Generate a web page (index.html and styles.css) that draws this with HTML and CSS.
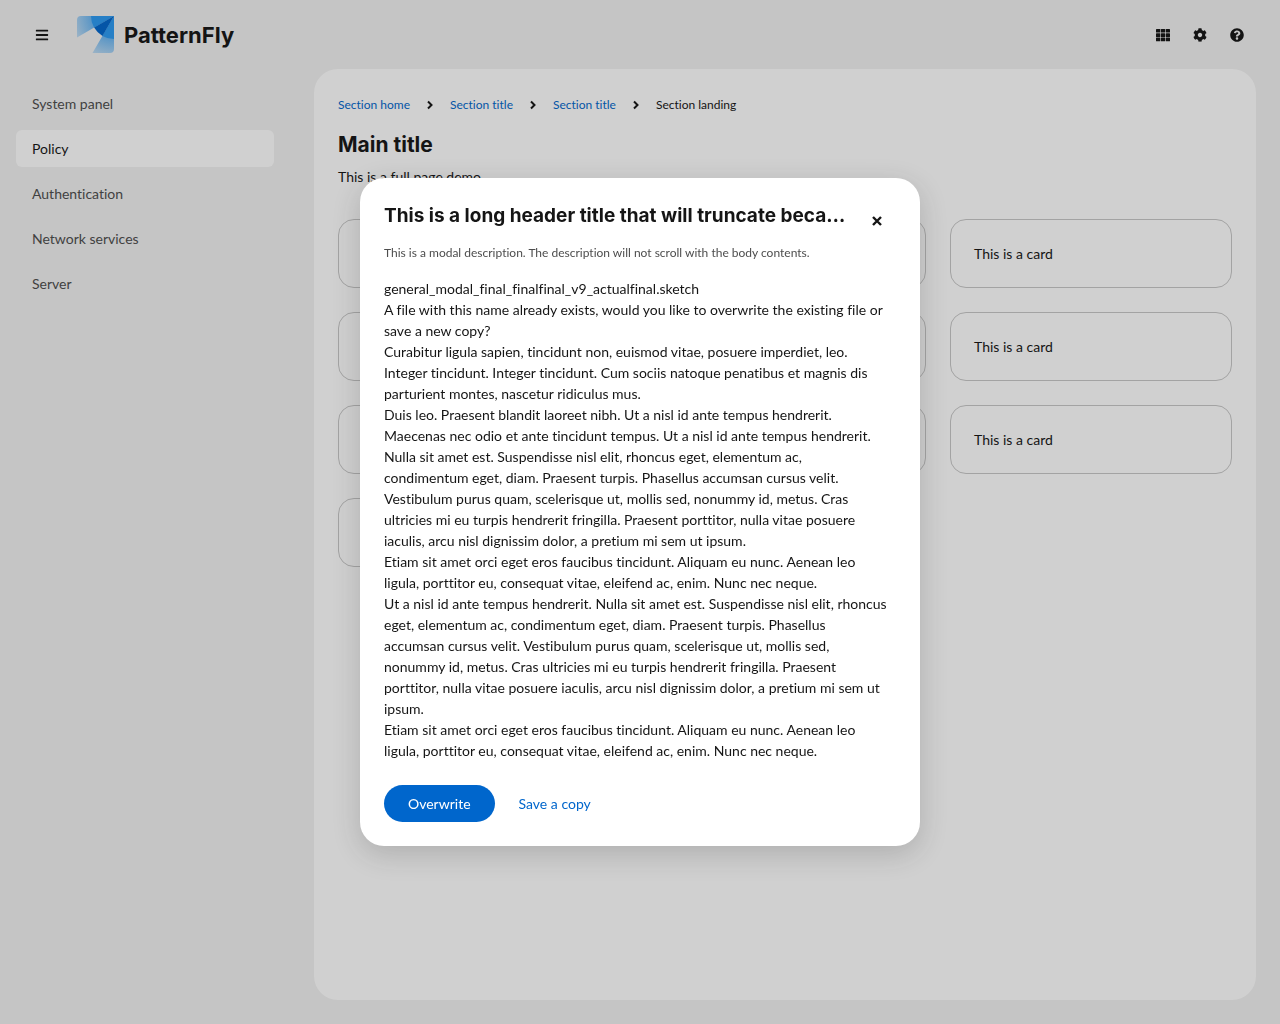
FILE: index.html
```html
<!DOCTYPE html>
<html lang="en">
<head>
<meta charset="utf-8">
<meta name="viewport" content="width=device-width, initial-scale=1">
<title>PatternFly</title>
<link rel="stylesheet" href="styles.css">
</head>
<body>
<div class="page">
  <header class="masthead">
    <button class="icon-button" type="button" aria-label="Global navigation">
      <svg class="icon" viewBox="0 0 448 512" aria-hidden="true"><path d="M16 132h416c8.800 0 16-7.200 16-16V76c0-8.800-7.200-16-16-16H16C7.200 60 0 67.200 0 76v40c0 8.800 7.200 16 16 16zm0 160h416c8.800 0 16-7.200 16-16v-40c0-8.800-7.200-16-16-16H16c-8.800 0-16 7.200-16 16v40c0 8.800 7.200 16 16 16zm0 160h416c8.800 0 16-7.200 16-16v-40c0-8.800-7.200-16-16-16H16c-8.800 0-16 7.200-16 16v40c0 8.800 7.200 16 16 16z"/></svg>
    </button>
    <a class="brand" href="#">
      <svg class="brand-mark" viewBox="0 0 37 37" aria-hidden="true">
        <defs>
          <radialGradient id="fade" gradientUnits="userSpaceOnUse" cx="37" cy="0" r="43">
            <stop offset="0.500" stop-color="#2b9af3" stop-opacity="0.700"/>
            <stop offset="1" stop-color="#2b9af3" stop-opacity="0.250"/>
          </radialGradient>
        </defs>
        <path fill="url(#fade)" d="M37 0H4a4 4 0 0 0-4 4v17.500zM37 0v33a4 4 0 0 1-4 4H15.500z"/>
        <path fill="#2b9af3" d="M37 0H14a23 23 0 0 0 3.100 11.500zM37 0v23a23 23 0 0 1-11.500-3.100z"/>
        <path fill="#06c" d="M37 0L17.100 11.500a23 23 0 0 0 8.400 8.400z"/>
      </svg>
      <span class="brand-name">PatternFly</span>
    </a>
    <div class="tools">
      <button class="icon-button" type="button" aria-label="Applications">
        <svg class="icon" viewBox="0 0 14 14" aria-hidden="true">
          <rect x="0" y="1" width="4.300" height="3.600" rx=".5"/><rect x="4.900" y="1" width="4.300" height="3.600" rx=".5"/><rect x="9.800" y="1" width="4.200" height="3.600" rx=".5"/>
          <rect x="0" y="5.300" width="4.300" height="3.600" rx=".5"/><rect x="4.900" y="5.300" width="4.300" height="3.600" rx=".5"/><rect x="9.800" y="5.300" width="4.200" height="3.600" rx=".5"/>
          <rect x="0" y="9.600" width="4.300" height="3.600" rx=".5"/><rect x="4.900" y="9.600" width="4.300" height="3.600" rx=".5"/><rect x="9.800" y="9.600" width="4.200" height="3.600" rx=".5"/>
        </svg>
      </button>
      <button class="icon-button" type="button" aria-label="Settings">
        <svg class="icon" viewBox="0 0 512 512" aria-hidden="true"><path d="M487.400 315.700l-42.600-24.600c4.300-23.200 4.300-47 0-70.200l42.600-24.600c4.900-2.800 7.100-8.600 5.500-14-11.100-35.600-30-67.800-54.700-94.600-3.800-4.100-10-5.100-14.800-2.300L380.800 110c-17.900-15.400-38.500-27.300-60.800-35.100V25.800c0-5.600-3.900-10.500-9.400-11.700-36.700-8.200-74.300-7.800-109.200 0-5.500 1.200-9.400 6.100-9.400 11.700V75c-22.200 7.900-42.800 19.800-60.800 35.100L88.700 85.500c-4.900-2.800-11-1.900-14.800 2.300-24.700 26.700-43.600 58.900-54.700 94.600-1.700 5.400.6 11.200 5.500 14L67.300 221c-4.300 23.200-4.300 47 0 70.200l-42.600 24.600c-4.900 2.800-7.100 8.600-5.500 14 11.100 35.600 30 67.800 54.700 94.600 3.800 4.100 10 5.100 14.800 2.300l42.600-24.600c17.900 15.400 38.500 27.300 60.800 35.100v49.200c0 5.600 3.900 10.500 9.400 11.700 36.700 8.200 74.300 7.800 109.200 0 5.500-1.200 9.400-6.100 9.400-11.700v-49.200c22.200-7.900 42.800-19.800 60.800-35.100l42.600 24.600c4.900 2.800 11 1.900 14.800-2.300 24.700-26.700 43.600-58.900 54.700-94.600 1.500-5.500-.7-11.300-5.600-14.100zM256 336c-44.100 0-80-35.900-80-80s35.900-80 80-80 80 35.900 80 80-35.900 80-80 80z"/></svg>
      </button>
      <button class="icon-button" type="button" aria-label="Help">
        <svg class="icon" viewBox="0 0 512 512" aria-hidden="true"><path d="M504 256c0 137-111 248-248 248S8 393 8 256C8 119.100 119 8 256 8s248 111.100 248 248zM262.700 90c-54.500 0-89.300 23-116.500 63.800-3.500 5.300-2.400 12.400 2.700 16.300l34.700 26.300c5.200 3.900 12.600 3 16.700-2.100 17.900-22.700 30.100-35.800 57.300-35.800 20.400 0 45.700 13.100 45.700 33 0 15-12.400 22.700-32.500 34C247.100 238.500 216 254.900 216 296v4c0 6.600 5.400 12 12 12h56c6.600 0 12-5.400 12-12v-1.300c0-28.500 83.200-29.600 83.200-106.700 0-58-60.200-102-116.500-102zM256 338c-25.400 0-46 20.600-46 46s20.600 46 46 46 46-20.600 46-46-20.600-46-46-46z"/></svg>
      </button>
    </div>
  </header>

  <nav class="sidebar" aria-label="Global">
    <a class="nav-link" href="#">System panel</a>
    <a class="nav-link nav-link-current" href="#" aria-current="page">Policy</a>
    <a class="nav-link" href="#">Authentication</a>
    <a class="nav-link" href="#">Network services</a>
    <a class="nav-link" href="#">Server</a>
  </nav>

  <main class="main">
    <nav class="breadcrumb" aria-label="Breadcrumb">
      <a class="link" href="#">Section home</a>
      <svg class="chevron" viewBox="0 0 6 10" aria-hidden="true"><path d="M1 1.500L4.500 5 1 8.500"/></svg>
      <a class="link" href="#">Section title</a>
      <svg class="chevron" viewBox="0 0 6 10" aria-hidden="true"><path d="M1 1.500L4.500 5 1 8.500"/></svg>
      <a class="link" href="#">Section title</a>
      <svg class="chevron" viewBox="0 0 6 10" aria-hidden="true"><path d="M1 1.500L4.500 5 1 8.500"/></svg>
      <span aria-current="page">Section landing</span>
    </nav>
    <h1 class="title">Main title</h1>
    <p class="subtitle">This is a full page demo.</p>
    <div class="gallery">
      <article class="card">This is a card</article>
      <article class="card">This is a card</article>
      <article class="card">This is a card</article>
      <article class="card">This is a card</article>
      <article class="card">This is a card</article>
      <article class="card">This is a card</article>
      <article class="card">This is a card</article>
      <article class="card">This is a card</article>
      <article class="card">This is a card</article>
      <article class="card">This is a card</article>
    </div>
  </main>
</div>

<div class="backdrop">
  <section class="modal" role="dialog" aria-modal="true" aria-labelledby="modal-title" aria-describedby="modal-description">
    <header class="modal-header">
      <h2 class="modal-title" id="modal-title">This is a long header title that will truncate because modal titles should be very short</h2>
      <button class="icon-button" type="button" aria-label="Close">
        <svg class="icon" viewBox="0 0 14 14" aria-hidden="true"><path class="cross" d="M3 3l8 8M11 3l-8 8"/></svg>
      </button>
    </header>
    <p class="modal-description" id="modal-description">This is a modal description. The description will not scroll with the body contents.</p>
    <div class="modal-body">
      <p>general_modal_final_finalfinal_v9_actualfinal.sketch</p>
      <p>A file with this name already exists, would you like to overwrite the existing file or<br>
        save a new copy?</p>
      <p>Curabitur ligula sapien, tincidunt non, euismod vitae, posuere imperdiet, leo.<br>
        Integer tincidunt. Integer tincidunt. Cum sociis natoque penatibus et magnis dis<br>
        parturient montes, nascetur ridiculus mus.</p>
      <p>Duis leo. Praesent blandit laoreet nibh. Ut a nisl id ante tempus hendrerit.<br>
        Maecenas nec odio et ante tincidunt tempus. Ut a nisl id ante tempus hendrerit.<br>
        Nulla sit amet est. Suspendisse nisl elit, rhoncus eget, elementum ac,<br>
        condimentum eget, diam. Praesent turpis. Phasellus accumsan cursus velit.<br>
        Vestibulum purus quam, scelerisque ut, mollis sed, nonummy id, metus. Cras<br>
        ultricies mi eu turpis hendrerit fringilla. Praesent porttitor, nulla vitae posuere<br>
        iaculis, arcu nisl dignissim dolor, a pretium mi sem ut ipsum.</p>
      <p>Etiam sit amet orci eget eros faucibus tincidunt. Aliquam eu nunc. Aenean leo<br>
        ligula, porttitor eu, consequat vitae, eleifend ac, enim. Nunc nec neque.</p>
      <p>Ut a nisl id ante tempus hendrerit. Nulla sit amet est. Suspendisse nisl elit, rhoncus<br>
        eget, elementum ac, condimentum eget, diam. Praesent turpis. Phasellus<br>
        accumsan cursus velit. Vestibulum purus quam, scelerisque ut, mollis sed,<br>
        nonummy id, metus. Cras ultricies mi eu turpis hendrerit fringilla. Praesent<br>
        porttitor, nulla vitae posuere iaculis, arcu nisl dignissim dolor, a pretium mi sem ut<br>
        ipsum.</p>
      <p>Etiam sit amet orci eget eros faucibus tincidunt. Aliquam eu nunc. Aenean leo<br>
        ligula, porttitor eu, consequat vitae, eleifend ac, enim. Nunc nec neque.</p>
    </div>
    <footer class="modal-footer">
      <button class="button button-primary" type="button">Overwrite</button>
      <button class="button button-link" type="button">Save a copy</button>
    </footer>
  </section>
</div>
</body>
</html>
```
FILE: styles.css
```css
*,
*::before,
*::after {
  box-sizing: border-box;
}

body {
  margin: 0;
  background: #f2f2f2;
  color: #151515;
  font-family: Lato, "Open Sans", sans-serif;
  font-size: 14px;
  font-variant-ligatures: none;
  line-height: 21px;
}

h1,
h2,
p {
  margin: 0;
}

a {
  color: inherit;
  text-decoration: none;
}

button {
  font: inherit;
  border: 0;
  cursor: pointer;
}

/* Page shell */
.page {
  display: grid;
  grid-template-columns: 290px minmax(0, 1fr);
  grid-template-rows: auto 1fr;
  min-height: 100vh;
}

.masthead {
  grid-column: 1 / -1;
  display: flex;
  align-items: center;
  gap: 16px;
  padding: 16px 24px;
}

.icon-button {
  display: flex;
  flex: none;
  align-items: center;
  width: 37px;
  height: 37px;
  padding: 0 12px 0 11px;
  border-radius: 6px;
  background: transparent;
  color: #151515;
}

.icon {
  width: 14px;
  height: 14px;
  fill: currentColor;
}

.cross {
  stroke: currentColor;
  stroke-width: 2.4;
}

.brand {
  display: flex;
  align-items: center;
  gap: 10px;
}

.brand-mark {
  width: 37px;
  height: 37px;
}

.brand-name,
.title,
.modal-title {
  font-family: Inter, "Open Sans", sans-serif;
  font-weight: 700;
}

.brand-name {
  font-size: 22px;
  line-height: 36px;
}

.tools {
  display: flex;
  margin-left: auto;
}

/* Sidebar */
.sidebar {
  display: flex;
  flex-direction: column;
  gap: 8px;
  padding: 16px;
}

.nav-link {
  padding: 8px 16px;
  border-radius: 6px;
  color: #4d4d4d;
}

.nav-link-current {
  background: #fff;
  color: #151515;
}

/* Main content */
.main {
  margin: 0 24px 24px;
  padding: 24px;
  border-radius: 24px;
  background: #fff;
}

.breadcrumb {
  display: flex;
  align-items: center;
  gap: 17px;
  font-size: 12px;
  line-height: 24px;
}

.link {
  color: #06c;
}

.chevron {
  width: 6px;
  height: 10px;
  fill: none;
  stroke: #151515;
  stroke-width: 2;
}

.title {
  margin-top: 13px;
  font-size: 21px;
  line-height: 29px;
}

.subtitle {
  margin-top: 7px;
}

.gallery {
  display: grid;
  grid-template-columns: repeat(3, minmax(0, 1fr));
  gap: 24px;
  margin-top: 32px;
}

.card {
  padding: 23px;
  border: 1px solid #c7c7c7;
  border-radius: 16px;
}

/* Modal */
.backdrop {
  position: fixed;
  inset: 0;
  display: flex;
  align-items: center;
  justify-content: center;
  background: rgba(21, 21, 21, 0.2);
}

.modal {
  width: 560px;
  max-width: calc(100% - 32px);
  max-height: 100%;
  overflow: auto;
  padding: 24px;
  border-radius: 24px;
  background: #fff;
  box-shadow: 0 8px 28px rgba(41, 41, 41, 0.2);
}

.modal-header {
  display: flex;
  align-items: flex-start;
  gap: 8px;
}

.modal-title {
  flex: 1;
  overflow: hidden;
  font-size: 19px;
  line-height: 27px;
  text-overflow: ellipsis;
  white-space: nowrap;
}

.modal-description {
  margin-top: 5px;
  color: #4d4d4d;
  font-size: 12px;
  line-height: 18px;
}

.modal-body {
  margin-top: 16px;
}

.modal-footer {
  display: flex;
  align-items: center;
  margin-top: 24px;
}

.button {
  padding: 8px 24px;
  border-radius: 24px;
}

.button-primary {
  background: #06c;
  color: #fff;
}

.button-link {
  background: transparent;
  color: #06c;
}
```
